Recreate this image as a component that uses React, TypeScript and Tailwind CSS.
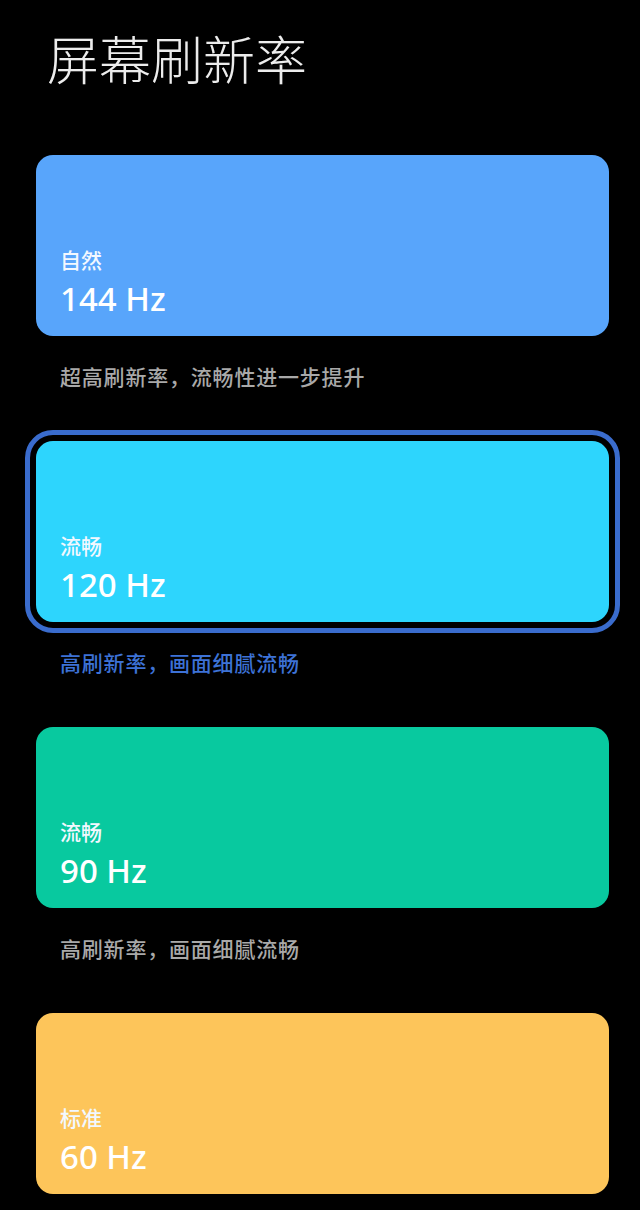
import React from "react";

type Mode = {
  label: string;
  rate: string;
  desc: string;
  card: string;
  selected?: boolean;
};

const modes: Mode[] = [
  { label: "自然", rate: "144 Hz", desc: "超高刷新率，流畅性进一步提升", card: "bg-[#58a5fb]" },
  { label: "流畅", rate: "120 Hz", desc: "高刷新率，画面细腻流畅", card: "bg-[#2dd5fd]", selected: true },
  { label: "流畅", rate: "90 Hz", desc: "高刷新率，画面细腻流畅", card: "bg-[#08c99f]" },
  { label: "标准", rate: "60 Hz", desc: "", card: "bg-[#fdc55a]" },
];

const font = { fontFamily: '"Noto Sans", "Noto Sans CJK SC", sans-serif' };

function ModeCard({ m }: { m: Mode }) {
  return (
    <div>
      <div
        className={
          "h-[181px] rounded-[17px] flex flex-col justify-end pl-[24px] pb-[21px] " +
          m.card +
          (m.selected ? " outline-[5px] outline-solid outline-[#3a6ccd] outline-offset-[6px]" : "")
        }
      >
        <div className="text-[21px] leading-[22px] font-medium text-[#f2f8ff] mb-[12px]">{m.label}</div>
        <div className="text-[33px] leading-[32px] font-medium text-white">{m.rate}</div>
      </div>
      {m.desc ? (
        <div
          className={
            "mt-[28px] mb-[51px] text-[21px] leading-[26px] tracking-[0.8px] font-medium " +
            (m.selected ? "text-[#3d72d6]" : "text-[#a9a9a9]")
          }
          style={{ paddingLeft: 24 }}
        >
          {m.desc}
        </div>
      ) : null}
    </div>
  );
}

export default function App() {
  return (
    <div className="w-[640px] h-[1210px] bg-black overflow-hidden" style={font}>
      <div className="pt-[28px] pl-[47px] h-[155px]">
        <h1 className="text-[52px] leading-[64px] font-light text-[#ececec]">屏幕刷新率</h1>
      </div>
      <div className="pl-[36px] pr-[31px]">
        {modes.map((m, i) => (
          <ModeCard key={i} m={m} />
        ))}
      </div>
    </div>
  );
}
